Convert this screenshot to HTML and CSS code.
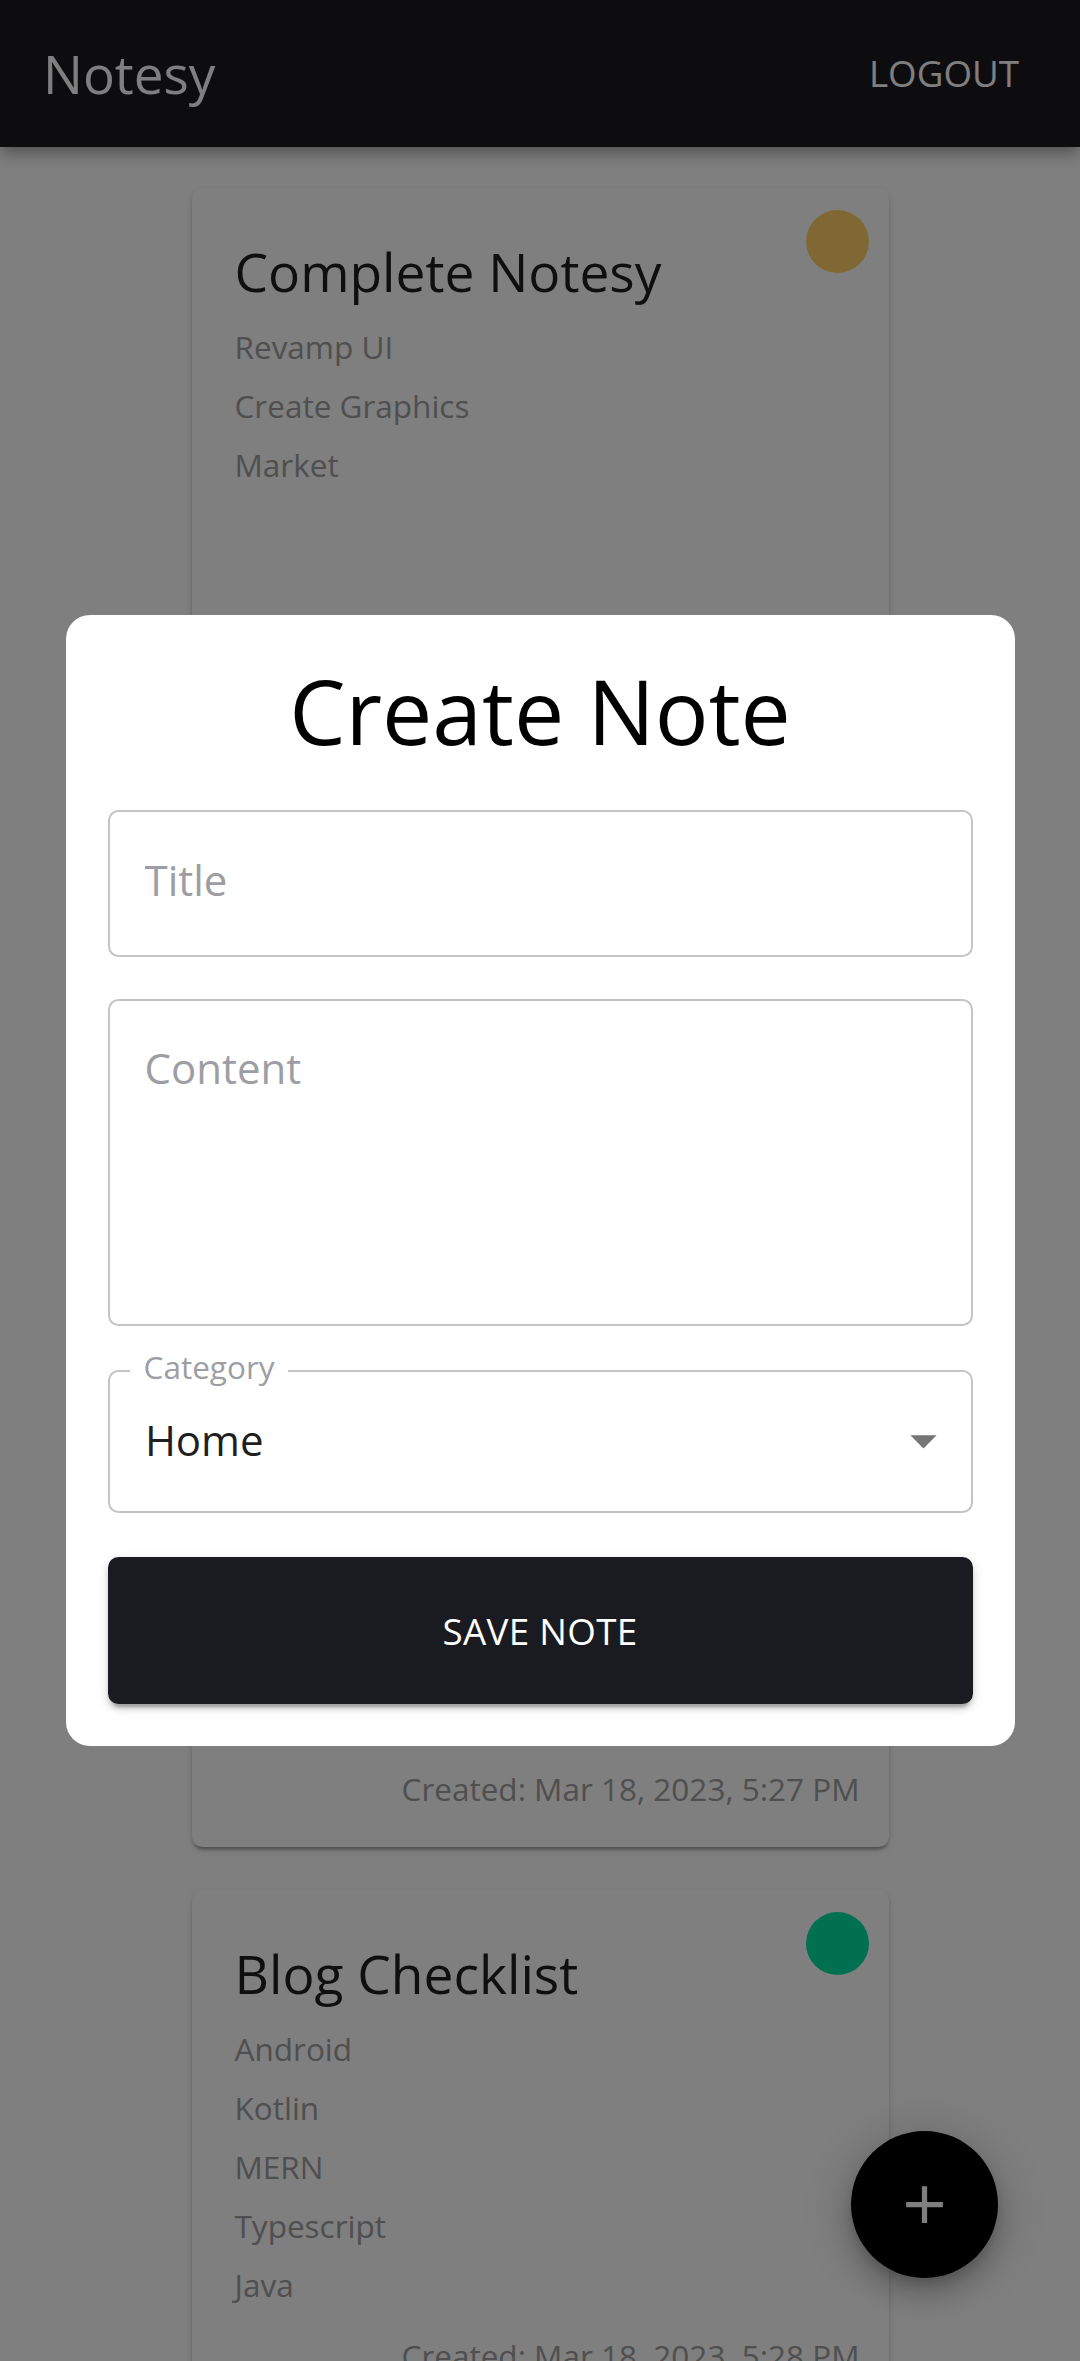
FILE: index.html
```html
<!DOCTYPE html>
<html lang="en">
<head>
<meta charset="utf-8">
<title>Notesy</title>
<link rel="stylesheet" href="styles.css">
</head>
<body>
<header class="appbar">
  <div class="brand">Notesy</div>
  <button class="logout">Logout</button>
</header>

<main class="notes">
  <article class="card">
    <span class="dot dot--gold"></span>
    <h2 class="card-title">Complete Notesy</h2>
    <ul class="card-items card-items--tall">
      <li>Revamp UI</li>
      <li>Create Graphics</li>
      <li>Market</li>
    </ul>
    <div class="created">Created: Mar 18, 2023, 5:27 PM</div>
  </article>

  <article class="card">
    <span class="dot dot--green"></span>
    <h2 class="card-title">Blog Checklist</h2>
    <ul class="card-items">
      <li>Android</li>
      <li>Kotlin</li>
      <li>MERN</li>
      <li>Typescript</li>
      <li>Java</li>
    </ul>
    <div class="created">Created: Mar 18, 2023, 5:28 PM</div>
  </article>
</main>

<button class="fab" aria-label="Add note">
  <svg viewBox="0 0 24 24" width="63" height="63"><path d="M19 13h-6v6h-2v-6H5v-2h6V5h2v6h6v2z" fill="#ffffff"/></svg>
</button>

<div class="overlay">
  <form class="modal">
    <h1 class="modal-title">Create Note</h1>
    <input class="field field--title" type="text" placeholder="Title">
    <textarea class="field field--content" placeholder="Content"></textarea>
    <fieldset class="select">
      <legend class="select-label">Category</legend>
      <div class="select-row">
        <span class="select-value">Home</span>
        <svg class="select-arrow" viewBox="0 0 24 24" width="63" height="63"><path d="M7 10l5 5 5-5z" fill="#757575"/></svg>
      </div>
    </fieldset>
    <button class="save" type="button">Save Note</button>
  </form>
</div>
</body>
</html>
```

FILE: styles.css
```css
* { box-sizing: border-box; }

html, body {
  margin: 0;
  padding: 0;
}

body {
  font-family: "Open Sans", "Noto Sans", "DejaVu Sans", sans-serif;
  background: #ffffff;
  color: #1f1f1f;
  width: 1080px;
  height: 2361px;
  overflow: hidden;
}

/* App bar */
.appbar {
  position: relative;
  z-index: 2;
  height: 147px;
  background: #1a1b20;
  display: flex;
  align-items: center;
  justify-content: space-between;
  padding: 0 40px 0 43px;
  box-shadow: 0 5px 10px -3px rgba(0,0,0,0.2), 0 10px 13px 0 rgba(0,0,0,0.14), 0 3px 26px 0 rgba(0,0,0,0.12);
}

.brand {
  font-size: 53px;
  line-height: 1;
  color: #ffffff;
  font-weight: 400;
}

.logout {
  background: none;
  border: none;
  color: #ffffff;
  font-family: inherit;
  font-size: 36.75px;
  font-weight: 400;
  text-transform: uppercase;
  padding: 0 21px;
  line-height: 1;
}

/* Notes list */
.notes {
  display: flex;
  flex-direction: column;
  align-items: center;
  gap: 43px;
  padding-top: 41px;
}

.card {
  position: relative;
  width: 697px;
  background: #ffffff;
  border-radius: 10.5px;
  padding: 42px 29px 36.5px 43px;
  box-shadow: 0 5px 3px -3px rgba(0,0,0,0.2), 0 3px 3px 0 rgba(0,0,0,0.14), 0 3px 8px 0 rgba(0,0,0,0.12);
}

.dot {
  position: absolute;
  top: 22px;
  right: 20px;
  width: 63px;
  height: 63px;
  border-radius: 50%;
}

.dot--gold { background: #ffd066; }
.dot--green { background: #00e0a2; }

.card-title {
  margin: 0;
  font-size: 53.3px;
  line-height: 84px;
  font-weight: 400;
  color: #1f1f1f;
}

.card-items {
  list-style: none;
  margin: 3px 0 0;
  padding: 0;
}

.card-items li {
  font-size: 31.5px;
  line-height: 59.2px;
  color: #9e9e9e;
}

.card-items--tall {
  min-height: 1431px;
}

.created {
  margin-top: 20px;
  text-align: right;
  font-size: 31.5px;
  line-height: 42px;
  color: #9e9e9e;
}

/* Floating action button */
.fab {
  position: fixed;
  right: 82px;
  bottom: 83px;
  width: 147px;
  height: 147px;
  border-radius: 50%;
  border: none;
  background: #000000;
  display: flex;
  align-items: center;
  justify-content: center;
  padding: 0;
  box-shadow: 0 8px 13px -3px rgba(0,0,0,0.2), 0 16px 26px 3px rgba(0,0,0,0.14), 0 5px 47px 13px rgba(0,0,0,0.12);
}

/* Modal */
.overlay {
  position: fixed;
  inset: 0;
  z-index: 10;
  background: rgba(0,0,0,0.5);
  display: flex;
  align-items: center;
  justify-content: center;
}

.modal {
  width: 949px;
  background: #ffffff;
  border-radius: 24px;
  padding: 40px 42px 42px;
  display: flex;
  flex-direction: column;
}

.modal-title {
  margin: 0 0 45px;
  font-size: 89.5px;
  line-height: 110px;
  font-weight: 400;
  text-align: center;
  color: #000000;
}

.field {
  display: block;
  width: 100%;
  border: 2.6px solid #c4c4c4;
  border-radius: 10.5px;
  font-family: inherit;
  font-size: 42px;
  color: #1f1f1f;
  background: #ffffff;
  outline: none;
}

.field::placeholder {
  color: #9d9ea4;
  opacity: 1;
}

.field--title {
  height: 147px;
  padding: 0 37px 8px 35px;
  margin-bottom: 42px;
}

.field--content {
  height: 327px;
  padding: 37px 37px 37px 35px;
  line-height: 60.4px;
  resize: none;
  margin-bottom: 25px;
}

.select {
  margin: 0 0 44px;
  border: 2.6px solid #c4c4c4;
  border-radius: 10.5px;
  padding: 0 15.4px 22px 20.4px;
  min-width: 0;
}

.select-label {
  padding: 0 13.7px 9px;
  font-size: 31.5px;
  line-height: 31.5px;
  color: #9d9ea4;
}

.select-row {
  height: 97.8px;
  display: flex;
  align-items: center;
  justify-content: space-between;
  padding-left: 15px;
}

.select-value {
  font-size: 42px;
  line-height: 1;
  color: #1f1f1f;
}

.select-arrow {
  display: block;
}

.save {
  height: 147px;
  width: 100%;
  border: none;
  border-radius: 10.5px;
  background: #1a1b20;
  color: #ffffff;
  font-family: inherit;
  font-size: 36.75px;
  font-weight: 500;
  text-transform: uppercase;
  letter-spacing: 0.3px;
  box-shadow: 0 8px 3px -5px rgba(0,0,0,0.2), 0 5px 5px 0 rgba(0,0,0,0.14), 0 3px 13px 0 rgba(0,0,0,0.12);
}
```
